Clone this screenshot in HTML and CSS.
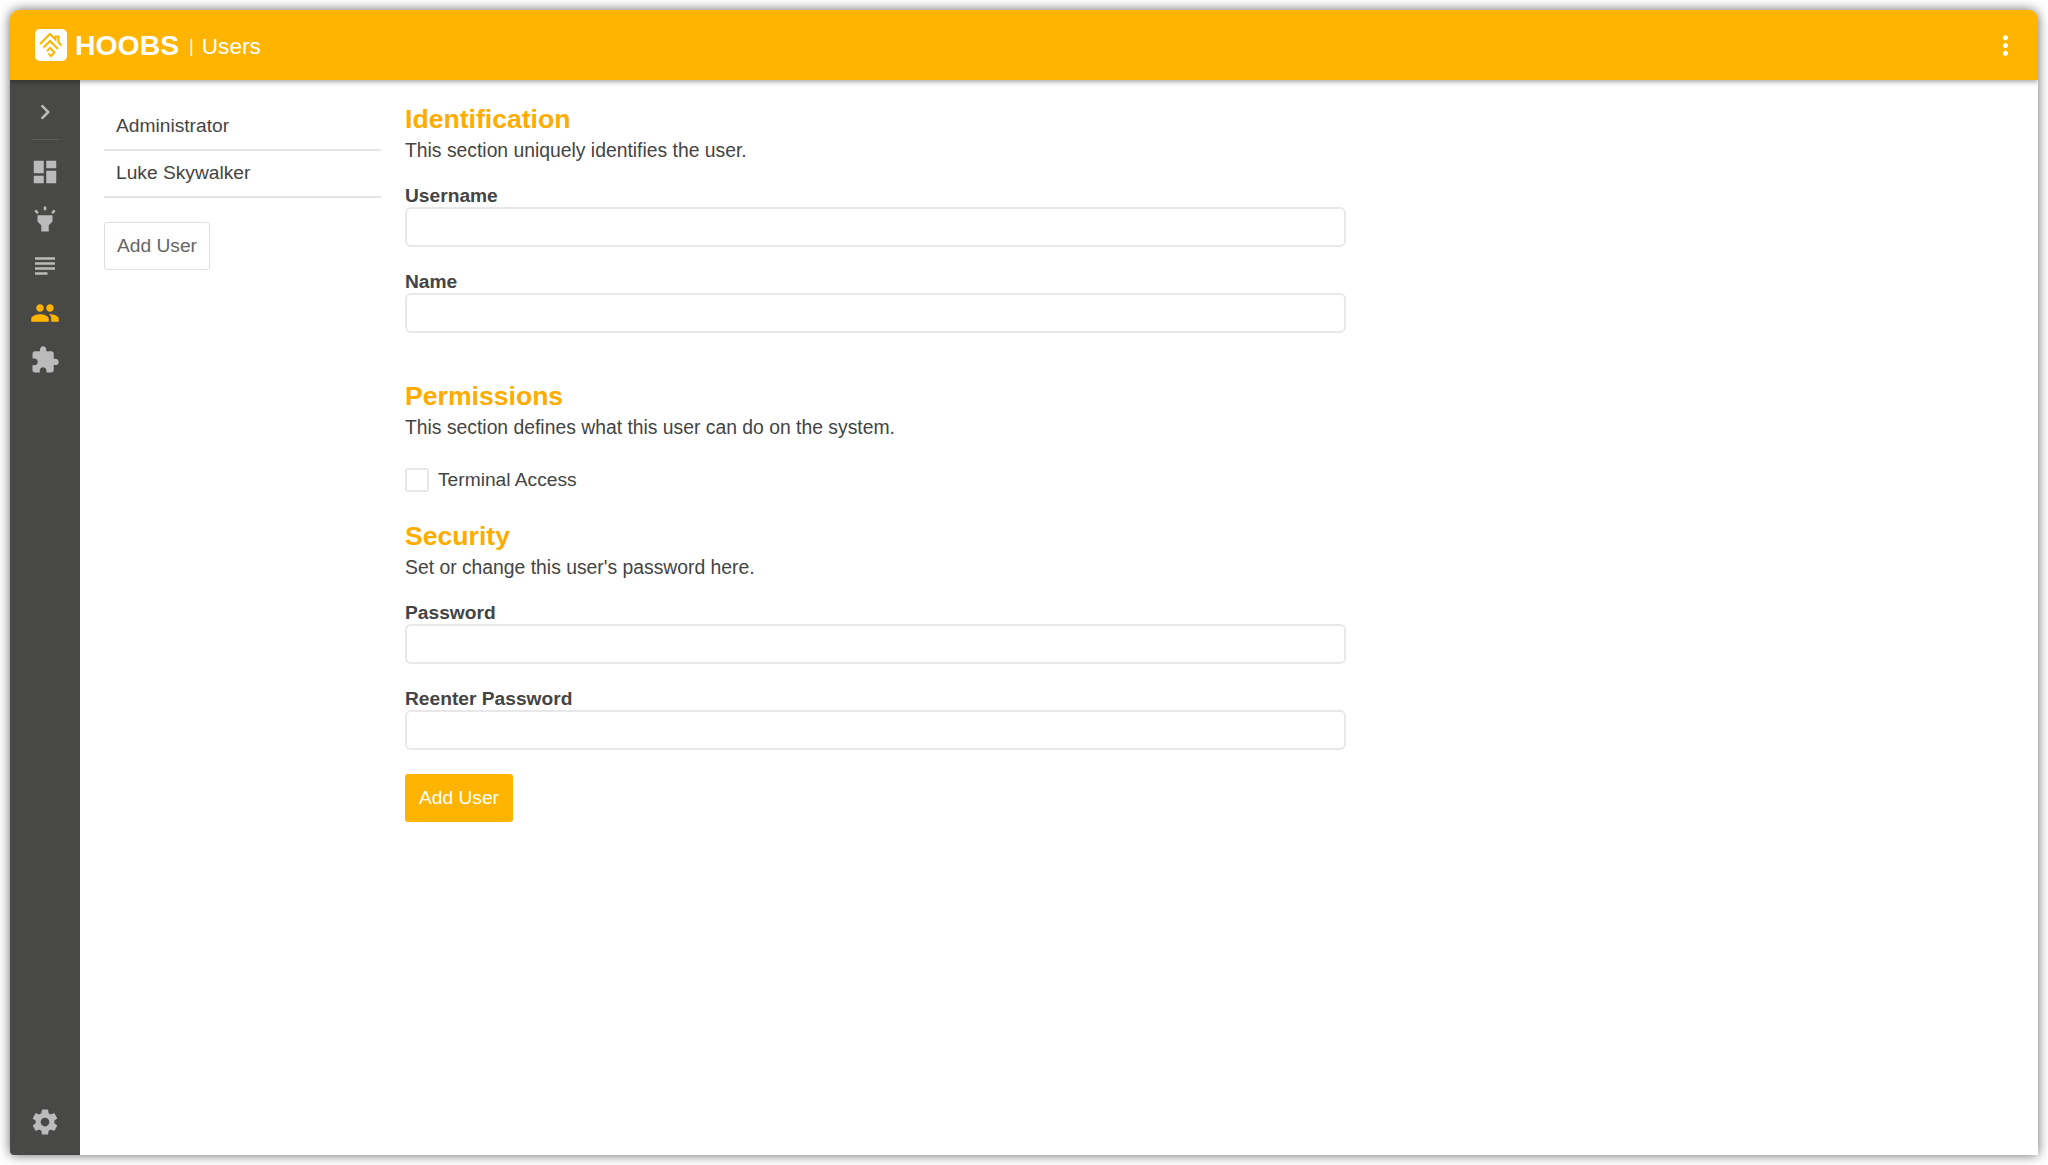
FILE: index.html

```html
<!DOCTYPE html>
<html lang="en">
<head>
    <meta charset="UTF-8">
    <title>HOOBS | Users</title>
    <link rel="stylesheet" href="styles.css">
</head>
<body>
<div id="window">
    <div id="header">
        <svg class="logo" viewBox="0 0 32 32">
            <rect width="32" height="32" rx="5" fill="#fff"/>
            <g fill="none" stroke="#feb400" stroke-width="2" stroke-linejoin="miter">
                <path d="M5 15 L15 5 L20.5 10.5 L20.5 7.5 L23.5 7.5 L23.5 13.5 L26.5 16.5"/>
                <path d="M8.5 18.5 L15 12 L23 20"/>
                <path d="M12 22 L15 19 L19.5 23.5 L16 27 L13.5 24.5"/>
            </g>
        </svg>
        <span id="header_name">HOOBS</span>
        <span id="header_sep">|</span>
        <span id="header_page">Users</span>
        <svg class="more" viewBox="0 0 24 24"><path d="M12 8c1.1 0 2-.9 2-2s-.9-2-2-2-2 .9-2 2 .9 2 2 2zm0 2c-1.1 0-2 .9-2 2s.9 2 2 2 2-.9 2-2-.9-2-2-2zm0 6c-1.1 0-2 .9-2 2s.9 2 2 2 2-.9 2-2-.9-2-2-2z"/></svg>
    </div>
    <div id="content">
        <div id="sidebar">
            <svg class="navicon" viewBox="0 0 24 24"><path d="M8.59 16.59L13.17 12 8.59 7.41 10 6l6 6-6 6z"/></svg>
            <div class="navline"></div>
            <svg class="navicon" viewBox="0 0 24 24"><path d="M3 13h8V3H3v10zm0 8h8v-6H3v6zm10 0h8V11h-8v10zm0-18v6h8V3h-8z"/></svg>
            <svg class="navicon" viewBox="0 0 24 24"><path d="M6 14l3 3v5h6v-5l3-3V9H6zm5-12h2v3h-2zM3.5 5.875L4.914 4.46l2.12 2.122L5.62 7.997zm13.46.71l2.123-2.12 1.414 1.414L18.375 8z"/></svg>
            <svg class="navicon" viewBox="0 0 24 24"><path d="M14 17H4v2h10v-2zm6-8H4v2h16V9zM4 15h16v-2H4v2zM4 5v2h16V5H4z"/></svg>
            <svg class="navicon selected" viewBox="0 0 24 24"><path d="M16 11c1.66 0 2.99-1.34 2.99-3S17.66 5 16 5c-1.66 0-3 1.34-3 3s1.34 3 3 3zm-8 0c1.66 0 2.99-1.34 2.99-3S9.66 5 8 5C6.34 5 5 6.34 5 8s1.34 3 3 3zm0 2c-2.33 0-7 1.17-7 3.5V19h14v-2.5c0-2.33-4.67-3.5-7-3.5zm8 0c-.29 0-.62.02-.97.05 1.16.84 1.97 1.97 1.97 3.45V19h6v-2.5c0-2.33-4.67-3.5-7-3.5z"/></svg>
            <svg class="navicon" viewBox="0 0 24 24"><path d="M20.5 11H19V7c0-1.1-.9-2-2-2h-4V3.5C13 2.12 11.88 1 10.5 1S8 2.12 8 3.5V5H4c-1.1 0-1.99.9-1.99 2v3.8H3.5c1.49 0 2.7 1.21 2.7 2.7s-1.21 2.7-2.7 2.7H2V20c0 1.1.9 2 2 2h3.8v-1.5c0-1.49 1.21-2.7 2.7-2.7 1.49 0 2.7 1.21 2.7 2.7V22H17c1.1 0 2-.9 2-2v-4h1.5c1.38 0 2.5-1.12 2.5-2.5S21.88 11 20.5 11z"/></svg>
            <svg class="navicon settings" viewBox="0 0 24 24"><path d="M19.43 12.98c.04-.32.07-.64.07-.98s-.03-.66-.07-.98l2.11-1.65c.19-.15.24-.42.12-.64l-2-3.46c-.12-.22-.39-.3-.61-.22l-2.49 1c-.52-.4-1.08-.73-1.69-.98l-.38-2.65C14.46 2.18 14.25 2 14 2h-4c-.25 0-.46.18-.49.42l-.38 2.65c-.61.25-1.17.59-1.69.98l-2.49-1c-.23-.09-.49 0-.61.22l-2 3.46c-.13.22-.07.49.12.64l2.11 1.65c-.04.32-.07.65-.07.98s.03.66.07.98l-2.11 1.65c-.19.15-.24.42-.12.64l2 3.46c.12.22.39.3.61.22l2.49-1c.52.4 1.08.73 1.69.98l.38 2.65c.03.24.24.42.49.42h4c.25 0 .46-.18.49-.42l.38-2.65c.61-.25 1.17-.59 1.69-.98l2.49 1c.23.09.49 0 .61-.22l2-3.46c.12-.22.07-.49-.12-.64l-2.11-1.65zM12 15.5c-1.93 0-3.5-1.57-3.5-3.5s1.57-3.5 3.5-3.5 3.5 1.57 3.5 3.5-1.57 3.5-3.5 3.5z"/></svg>
        </div>
        <div id="users">
            <a class="user">Administrator</a>
            <a class="user">Luke Skywalker</a>
            <button class="button add">Add User</button>
        </div>
        <div id="form">
            <h2 class="title">Identification</h2>
            <p class="desc">This section uniquely identifies the user.</p>
            <label class="label first">Username</label>
            <input class="field" type="text">
            <label class="label">Name</label>
            <input class="field" type="text">

            <h2 class="title perms">Permissions</h2>
            <p class="desc">This section defines what this user can do on the system.</p>
            <div class="check">
                <span class="box"></span>
                <span>Terminal Access</span>
            </div>

            <h2 class="title security">Security</h2>
            <p class="desc">Set or change this user's password here.</p>
            <label class="label first">Password</label>
            <input class="field" type="password">
            <label class="label">Reenter Password</label>
            <input class="field" type="password">

            <button class="button primary">Add User</button>
        </div>
    </div>
</div>
</body>
</html>
```

FILE: styles.css

```css
html, body {
    height: 100%;
}

body {
    margin: 0;
    padding: 10px;
    box-sizing: border-box;
    background-color: #fff;
    color: #444;
    font-family: "Liberation Sans", Arial, sans-serif;
    font-size: 19.2px;
}

#window {
    height: 100%;
    display: flex;
    flex-direction: column;
    background-color: #fff;
    border-radius: 9px 9px 0 4px;
    box-shadow: 0 0 12px rgba(0, 0, 0, .6);
    overflow: hidden;
}

#header {
    position: relative;
    z-index: 1;
    flex: none;
    height: 70px;
    display: flex;
    align-items: center;
    padding-left: 25px;
    padding-right: 17px;
    background-color: #feb400;
    color: white;
    box-shadow: 0 2px 5px rgba(0, 0, 0, .35);
}

.logo {
    width: 32px;
    height: 32px;
}

#header_name {
    margin-left: 8px;
    margin-top: 1px;
    font-size: 28.4px;
    font-weight: bold;
}

#header_sep {
    margin-left: 10px;
    margin-top: 3px;
    font-size: 18px;
}

#header_page {
    margin-left: 8px;
    margin-top: 4px;
    font-size: 22.6px;
}

.more {
    margin-left: auto;
    width: 31px;
    height: 31px;
    fill: white;
}

#content {
    flex: 1;
    min-height: 0;
    display: flex;
}

#sidebar {
    flex: none;
    width: 70px;
    display: flex;
    flex-direction: column;
    align-items: center;
    padding-top: 17px;
    padding-bottom: 18px;
    box-sizing: border-box;
    background-color: #484846;
}

.navicon {
    flex: none;
    width: 30px;
    height: 30px;
    margin-bottom: 17px;
    fill: #bbb;
}

.navicon.selected {
    fill: #feb400;
}

.navicon.settings {
    margin-top: auto;
    margin-bottom: 0;
}

.navline {
    width: 27px;
    height: 1px;
    margin-top: -5px;
    margin-bottom: 17px;
    background-color: #5d5d5b;
}

#users {
    flex: none;
    width: 277px;
    margin-left: 24px;
    margin-right: 24px;
    padding-top: 24px;
}

.user {
    display: block;
    height: 47px;
    line-height: 44px;
    padding-left: 12px;
    box-sizing: border-box;
    border-bottom: 2px solid #e5e5e5;
}

.button {
    display: block;
    height: 48px;
    border-radius: 3px;
    font-family: inherit;
    font-size: 19.2px;
}

.button.add {
    margin-top: 24px;
    padding: 0 12px;
    background-color: #fff;
    border: 1px solid #dfdfdf;
    color: #666;
}

.button.primary {
    margin-top: 24px;
    padding: 0 14px;
    background-color: #feb400;
    border: 0;
    color: white;
}

#form {
    flex: 1;
    padding-top: 22px;
}

.title {
    margin: 0;
    color: #feac00;
    font-size: 26.6px;
    line-height: 34px;
}

.title.perms {
    margin-top: 46px;
}

.title.security {
    margin-top: 27px;
}

.desc {
    margin: 0;
    margin-top: 1px;
    font-size: 19.33px;
    line-height: 27px;
}

.label {
    display: block;
    margin-top: 24px;
    line-height: 22px;
    font-weight: bold;
}

.label.first {
    margin-top: 21px;
}

.field {
    display: block;
    width: 941px;
    height: 40px;
    padding: 0;
    box-sizing: border-box;
    background-color: #fff;
    border: 2px solid #e8e8e8;
    border-radius: 6px;
}

.check {
    display: flex;
    align-items: center;
    margin-top: 27px;
    height: 24px;
}

.box {
    width: 24px;
    height: 24px;
    margin-right: 9px;
    box-sizing: border-box;
    border: 2px solid #e8e8e8;
    border-radius: 3px;
}
```
